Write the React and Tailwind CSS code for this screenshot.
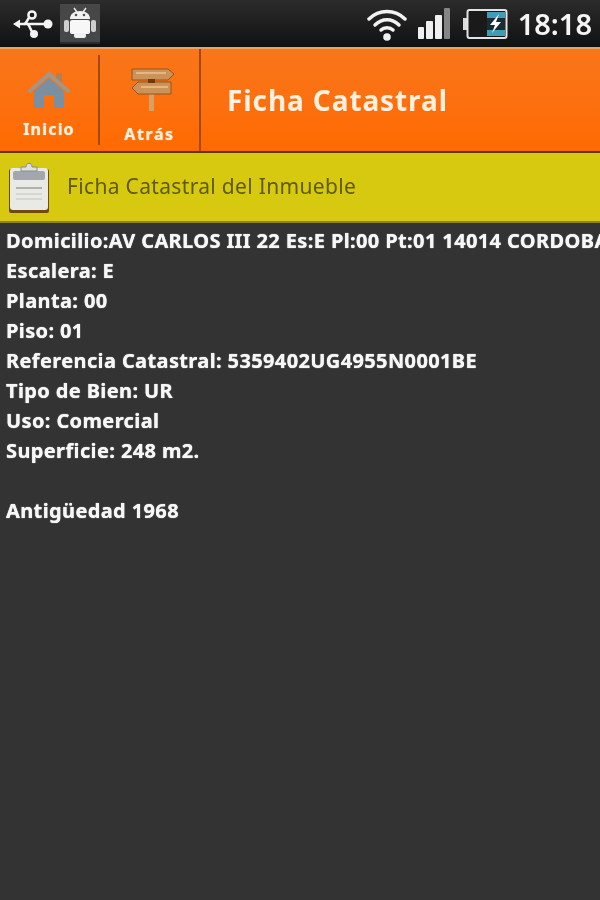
const rows = [
  'Domicilio:AV CARLOS III 22 Es:E Pl:00 Pt:01 14014 CORDOBA',
  'Escalera: E',
  'Planta: 00',
  'Piso: 01',
  'Referencia Catastral: 5359402UG4955N0001BE',
  'Tipo de Bien: UR',
  'Uso: Comercial',
  'Superficie: 248 m2.',
  '',
  'Antigüedad 1968',
]

function UsbIcon() {
  return (
    <svg width="40" height="30" viewBox="0 0 40 30" fill="none">
      <path d="M4 15H34" stroke="#f4f4f4" strokeWidth="2.5" />
      <path d="M0 15l7-4.5v9z" fill="#f4f4f4" />
      <circle cx="35" cy="15" r="4.5" fill="#f4f4f4" />
      <path d="M11 15c3 0 4-8 8-9h4" stroke="#f4f4f4" strokeWidth="2.5" />
      <path d="M14 15c3 0 3 8 7 9" stroke="#f4f4f4" strokeWidth="2.5" />
      <circle cx="19" cy="6" r="3.6" fill="#1b1b1b" stroke="#f4f4f4" strokeWidth="2.5" />
      <circle cx="21" cy="25" r="4" fill="#f4f4f4" />
    </svg>
  )
}

function AndroidIcon() {
  return (
    <div className="w-[40px] h-[40px] bg-[#474747] flex items-center justify-center border-b-2 border-[#2b2b2b]">
      <svg width="34" height="32" viewBox="0 0 34 32">
        <path d="M11 1l3 4M23 1l-3 4" stroke="#e6e6e6" strokeWidth="1.5" />
        <path d="M7 12c0-5 4-8 10-8s10 3 10 8z" fill="#f1f1f1" />
        <circle cx="13" cy="8" r="1.3" fill="#555" />
        <circle cx="21" cy="8" r="1.3" fill="#555" />
        <rect x="7" y="13" width="20" height="14" rx="2" fill="#f7f7f7" />
        <rect x="11" y="26" width="12" height="5" rx="2" fill="#f0f0f0" />
        <rect x="1" y="13" width="5" height="12" rx="2" fill="#cfcfcf" />
        <rect x="28" y="13" width="5" height="12" rx="2" fill="#cfcfcf" />
      </svg>
    </div>
  )
}

function WifiIcon() {
  return (
    <svg width="40" height="34" viewBox="0 0 40 34" fill="none">
      <path d="M2 12C12 2 28 2 38 12" stroke="#f2f2f2" strokeWidth="3.5" strokeLinecap="round" />
      <path d="M8 18C15 11 25 11 32 18" stroke="#f2f2f2" strokeWidth="3.5" strokeLinecap="round" />
      <path d="M14 23c3-3 9-3 12 0" stroke="#f2f2f2" strokeWidth="3.5" strokeLinecap="round" />
      <circle cx="20" cy="30" r="3.8" fill="#f2f2f2" />
    </svg>
  )
}

function SignalIcon() {
  return (
    <div className="flex items-end gap-[2px] h-[31px] w-[34px]">
      <div className="w-[6px] h-[12px] bg-[#efefef] rounded-[1px]" />
      <div className="w-[7px] h-[18px] bg-[#efefef] rounded-[1px]" />
      <div className="w-[7px] h-[24px] bg-[#efefef] rounded-[1px]" />
      <div className="w-[6px] h-[31px] bg-[#858585] rounded-[1px]" />
    </div>
  )
}

function BatteryIcon() {
  return (
    <svg width="45" height="30" viewBox="0 0 45 30">
      <rect x="0" y="9" width="4" height="12" fill="#dcdcdc" />
      <rect x="4.5" y="1" width="39" height="28" rx="2" fill="#1a1a1a" stroke="#e4e4e4" strokeWidth="2" />
      <rect x="24" y="3" width="18" height="24" fill="#1c2c33" />
      <rect x="24" y="3" width="18" height="6" fill="#3f9db8" />
      <rect x="24" y="21" width="18" height="6" fill="#3f9db8" />
      <path d="M36 5l-9 11h5l-3 8 9-11h-5l3-8z" fill="#fff" />
    </svg>
  )
}

function HomeIcon() {
  return (
    <svg width="44" height="38" viewBox="0 0 44 38">
      <path d="M29 2h6v10l-6-5z" fill="#b57f50" />
      <path d="M0 20L22 0l22 20-3 2L22 6 3 22z" fill="#a89482" />
      <path d="M7 20L22 7l15 13v17H27V24H17v13H7z" fill="#7b8fa3" />
    </svg>
  )
}

function SignIcon() {
  return (
    <svg width="44" height="44" viewBox="0 0 44 44">
      <rect x="18" y="26" width="5" height="18" fill="#d9a066" />
      <path d="M1 2h36l6 5-6 6H1z" fill="#c9935a" stroke="#95541a" strokeWidth="1" />
      <path d="M40 15H7l-6 6 6 6h33z" fill="#c9935a" stroke="#95541a" strokeWidth="1" />
      <path d="M5 6h30M10 20h27" stroke="#e6b680" strokeWidth="2" />
      <rect x="17" y="12" width="7" height="4" fill="#6f3a0a" />
    </svg>
  )
}

function ClipboardIcon() {
  return (
    <svg width="42" height="52" viewBox="0 0 42 52">
      <rect x="1" y="8" width="40" height="44" rx="2" fill="#6f4a14" />
      <rect x="2" y="7" width="38" height="42" rx="3" fill="#e9e9e6" />
      <rect x="5" y="10" width="32" height="9" rx="2" fill="#a3a7ad" />
      <path d="M8 27h26" stroke="#9c9c98" strokeWidth="1.5" />
      <path d="M8 33h26M8 38h26" stroke="#cfcfc8" strokeWidth="1.5" />
      <path d="M13 10V6h5c0-5 6-5 6 0h5v4z" fill="#dfe0e0" stroke="#8b8b8b" strokeWidth="1" />
    </svg>
  )
}

export default function App() {
  return (
    <div className="w-[600px] h-[900px] bg-[#333333] overflow-hidden blur-[0.4px] font-['Noto_Sans','Open_Sans',sans-serif]">
      <div className="h-[47px] bg-gradient-to-b from-[#2c2c2c] to-[#111111] flex items-center justify-between pl-[13px] pr-[8px]">
        <div className="flex items-center gap-[7px]">
          <UsbIcon />
          <AndroidIcon />
        </div>
        <div className="flex items-center">
          <div className="mr-[11px]"><WifiIcon /></div>
          <div className="mr-[11px]"><SignalIcon /></div>
          <BatteryIcon />
          <span className="ml-[10px] text-[29px] leading-none font-semibold text-[#f5f5f5]">18:18</span>
        </div>
      </div>

      <div className="h-[106px] bg-gradient-to-b from-[#f9761a] to-[#ff6a00] border-t-2 border-b-2 border-t-[#e9a26a] border-b-[#5c3a10] flex">
        <div className="w-[100px] flex items-center">
          <div className="flex-1 flex flex-col items-center pt-[7px]">
            <HomeIcon />
            <span className="mt-[12px] text-[16px] font-bold leading-none tracking-[1.2px] text-[#fff0dc] [text-shadow:0_0_1px_#fff0dc]">Inicio</span>
          </div>
          <div className="w-[2px] h-[90px] bg-[#a34a08]" />
        </div>
        <div className="w-[101px] border-r-2 border-[#a34a08] flex flex-col items-center pt-[18px]">
          <div className="pl-[6px]"><SignIcon /></div>
          <span className="mt-[15px] text-[16px] font-bold leading-none text-[#fff0dc] tracking-[1.6px] [text-shadow:0_0_1px_#fff0dc]">Atrás</span>
        </div>
        <div className="flex-1 flex items-center pl-[26px] pb-[1px]">
          <span className="text-[28px] font-bold tracking-[0.9px] text-[#fff0e0]">Ficha Catastral</span>
        </div>
      </div>

      <div className="h-[70px] bg-[#d7c90f] border-b-2 border-[#8c8420] flex items-center pl-[8px]">
        <ClipboardIcon />
        <span className="ml-[17px] text-[21px] tracking-[0.33px] text-[#5f5a08]">Ficha Catastral del Inmueble</span>
      </div>

      <div className="pl-[6px] pt-[3px] whitespace-nowrap text-[20px] font-bold leading-[30px] tracking-[0.38px] text-[#f7f7f7] [text-shadow:0_0_1px_#f7f7f7]">
        {rows.map((row, i) => (
          <div key={i} className="h-[30px]">{row}</div>
        ))}
      </div>
    </div>
  )
}
